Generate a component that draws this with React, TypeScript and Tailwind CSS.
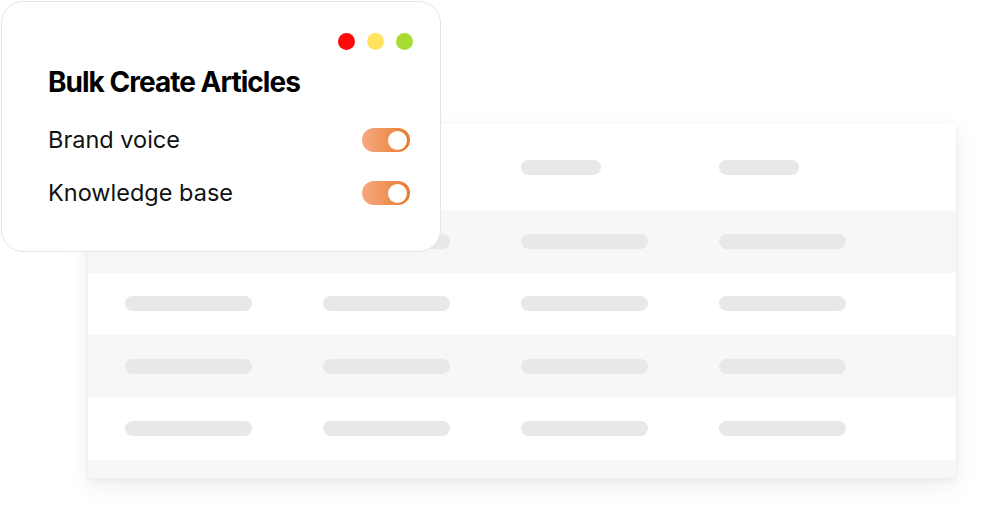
import React from "react";

const rows = [0, 1, 2, 3];

function Pill({ wide = true }: { wide?: boolean }) {
  return <div className={`h-[15px] rounded-full bg-[#e8e8e8] ${wide ? "w-[127px]" : "w-[80px]"}`} />;
}

function Toggle() {
  return (
    <div className="flex h-[24px] w-[48px] items-center justify-end rounded-full bg-gradient-to-r from-[#f6a882] via-[#f09358] to-[#e8792a] px-[3px]">
      <div className="h-[19px] w-[19px] rounded-full bg-white" />
    </div>
  );
}

export default function App() {
  return (
    <div
      className="relative h-[518px] w-[985px] overflow-hidden bg-white"
      style={{ fontFamily: "Inter, 'Noto Sans', sans-serif" }}
    >
      {/* background table */}
      <div className="ml-[88px] mt-[124px] w-[868px] bg-white shadow-[0_8px_24px_rgba(0,0,0,0.07),0_2px_6px_rgba(0,0,0,0.05)]">
        <div className="flex h-[86px] items-center pl-[433px]">
          <div className="flex gap-[118px]">
            <Pill wide={false} />
            <Pill wide={false} />
          </div>
        </div>
        {rows.map((r) => (
          <div
            key={r}
            className={`flex h-[62.5px] items-center gap-[71px] pl-[37px] ${r % 2 === 0 ? "bg-[#f7f7f7]" : "bg-white"}`}
          >
            <Pill />
            <Pill />
            <Pill />
            <Pill />
          </div>
        ))}
        <div className="h-[18px] bg-[#f7f7f7]" />
      </div>

      {/* floating settings card */}
      <div className="absolute left-[1px] top-[1px] h-[251px] w-[440px] rounded-[22px] border-[1.5px] border-[#e4e4e4] bg-white pl-[46px] pr-[30px] pt-[31px]">
        <div className="-mr-[3px] flex justify-end gap-[12px]">
          <span className="h-[17px] w-[17px] rounded-full bg-[#ff0a0a]" />
          <span className="h-[17px] w-[17px] rounded-full bg-[#ffe35c]" />
          <span className="h-[17px] w-[17px] rounded-full bg-[#a7dc33]" />
        </div>
        <h1 className="mt-[14px] text-[28px] font-bold leading-[36px] tracking-[-0.035em] text-black">
          Bulk Create Articles
        </h1>
        <div className="mt-[25px] flex items-center justify-between">
          <span className="text-[23.5px] leading-[30px] text-[#111]">Brand voice</span>
          <Toggle />
        </div>
        <div className="mt-[23px] flex items-center justify-between">
          <span className="text-[23.5px] leading-[30px] text-[#111]">Knowledge base</span>
          <Toggle />
        </div>
      </div>
    </div>
  );
}
